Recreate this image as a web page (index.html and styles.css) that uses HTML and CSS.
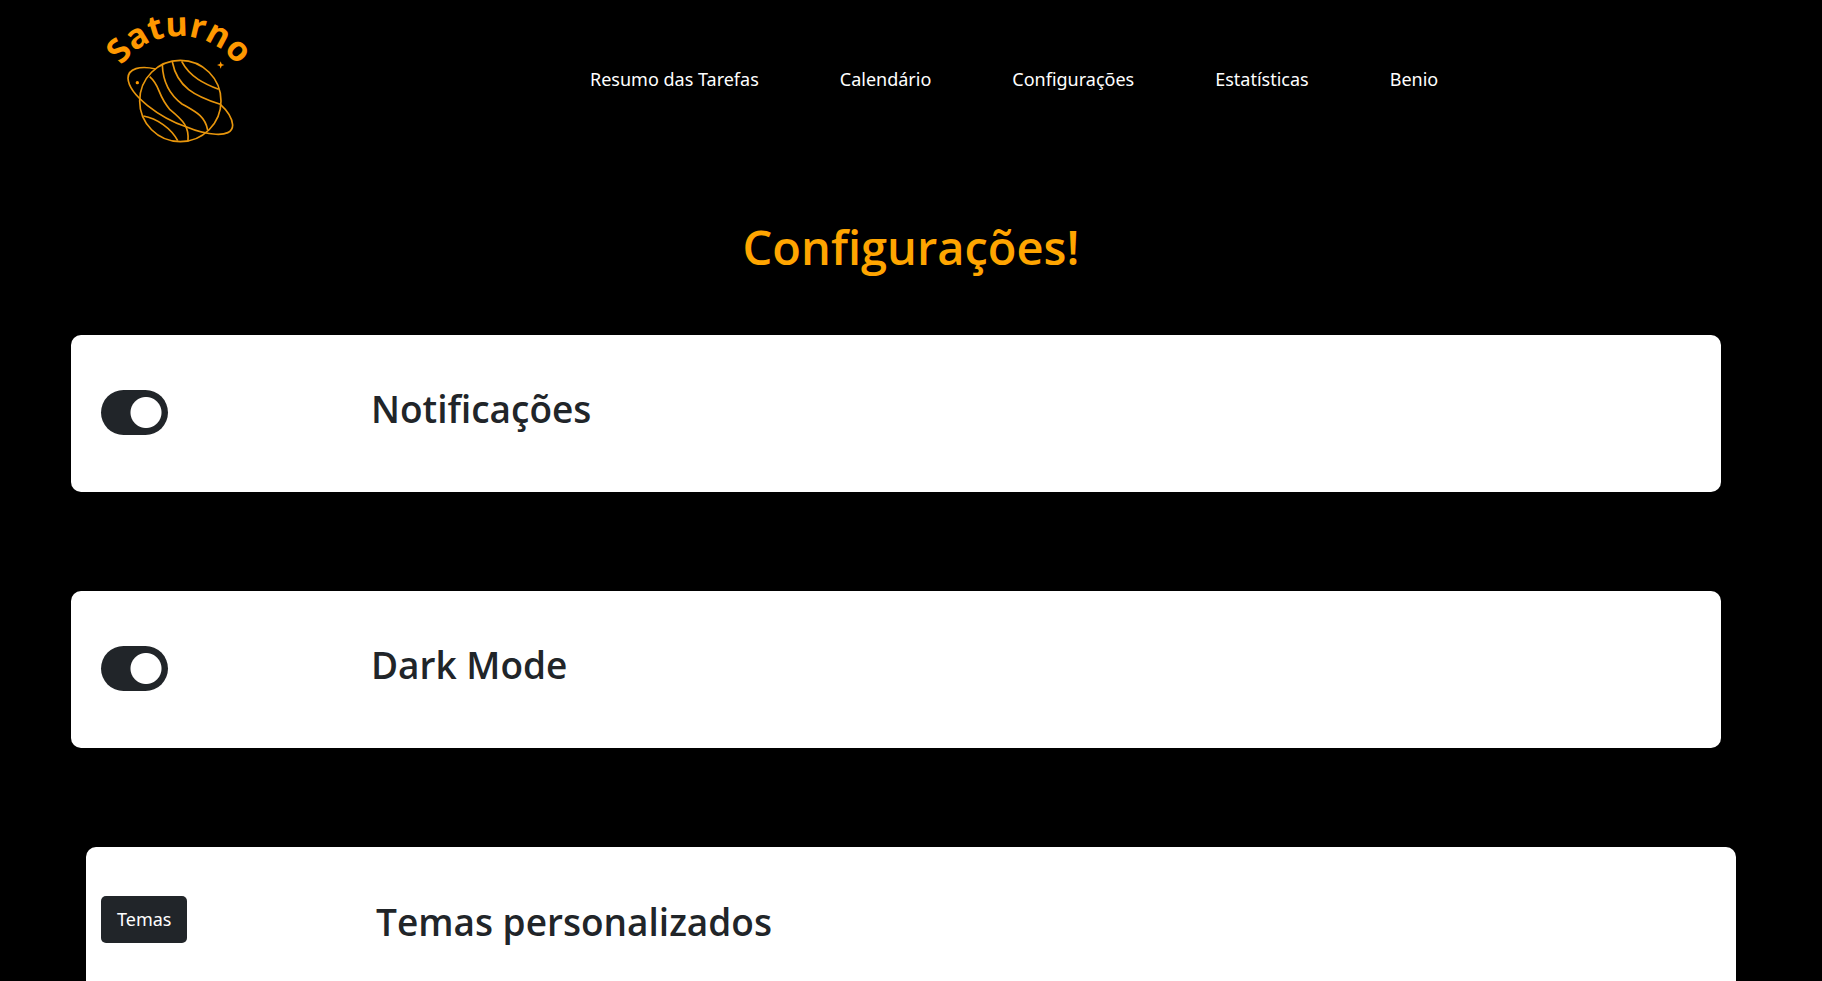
FILE: index.html
```
<!DOCTYPE html>
<html lang="pt-BR">
<head>
<meta charset="utf-8">
<meta name="viewport" content="width=device-width, initial-scale=1">
<title>Saturno - Configurações</title>
<link rel="stylesheet" href="styles.css">
</head>
<body>
<header class="header">
  <a class="logo" href="#" aria-label="Saturno">
    <svg class="logo-art" viewBox="0 0 540 480">
      <path id="arc" d="M54 322A214 214 0 0 1 482 322" fill="none"/>
      <text class="logo-text"><textPath href="#arc" startOffset="50%">Saturno</textPath></text>
      <g class="logo-lines">
        <circle cx="271" cy="303" r="122"/>
        <path d="M197 207C150 196 114 206 114 235C116 285 210 354 290 381C340 402 428 420 428 375C426 350 410 330 391 313"/>
        <path d="M275 184C300 232 345 252 386 268"/>
        <path d="M247 186C262 262 315 288 391 313"/>
        <path d="M217 195C219 250 240 285 276 312C318 336 345 348 353 390"/>
        <path d="M179 230C212 258 200 282 240 329C280 362 298 380 294 424"/>
        <path d="M160 348C200 355 244 385 263 422"/>
      </g>
      <path class="logo-star" d="M392 184L395 192L403 195L395 198L392 206L389 198L381 195L389 192Z"/>
      <circle class="logo-star" cx="142" cy="248" r="5"/>
    </svg>
  </a>
  <nav class="nav">
    <a href="#">Resumo das Tarefas</a>
    <a href="#">Calendário</a>
    <a href="#">Configurações</a>
    <a href="#">Estatísticas</a>
    <a href="#">Benio</a>
  </nav>
</header>
<main class="main">
  <h1 class="title">Configurações!</h1>
  <section class="card card-shifted">
    <div class="control"><input class="switch" type="checkbox" role="switch" id="notificacoes" checked></div>
    <h2 class="label"><label for="notificacoes">Notificações</label></h2>
  </section>
  <section class="card card-shifted">
    <div class="control"><input class="switch" type="checkbox" role="switch" id="dark-mode" checked></div>
    <h2 class="label"><label for="dark-mode">Dark Mode</label></h2>
  </section>
  <section class="card">
    <div class="control"><button class="button" type="button">Temas</button></div>
    <h2 class="label">Temas personalizados</h2>
  </section>
</main>
</body>
</html>
```
FILE: styles.css
```
* {
  box-sizing: border-box;
}

body {
  margin: 0;
  background: #000;
  color: #212529;
  font-family: "Noto Sans", "Open Sans", sans-serif;
  font-size: 18px;
  line-height: 31px;
}

.header {
  display: flex;
  align-items: center;
  padding-left: 90px;
}

.logo {
  width: 180px;
}

.logo-art {
  display: block;
  width: 100%;
  overflow: visible;
}

.logo-text {
  fill: #ff9800;
  font-family: "Open Sans", sans-serif;
  font-size: 102px;
  font-weight: 700;
  text-anchor: middle;
}

.logo-lines {
  fill: none;
  stroke: #e8960c;
  stroke-width: 5;
}

.logo-star {
  fill: #ff9800;
}

.nav {
  display: flex;
  gap: 81px;
  margin-left: 320px;
  padding-bottom: 2px;
}

.nav a {
  color: #fff;
  text-decoration: none;
}

.main {
  padding: 55px 86px 80px;
}

.title {
  margin: 0 0 56px;
  color: #ffa500;
  font-family: "Open Sans", sans-serif;
  font-size: 47px;
  font-weight: 600;
  line-height: 64px;
  text-align: center;
}

.card {
  display: grid;
  grid-template-columns: 1fr 5fr;
  column-gap: 6px;
  align-items: start;
  margin-bottom: 99px;
  padding: 49px 15px;
  min-height: 157px;
  background: #fff;
  border-radius: 10px;
}

.card-shifted {
  column-gap: 0;
  margin-right: 15px;
  margin-left: -15px;
  padding: 48px 0 48px 30px;
}

.control {
  display: flex;
}

.card-shifted .control {
  padding-top: 7px;
}

.switch {
  appearance: none;
  width: 67px;
  height: 45px;
  margin: 0;
  border-radius: 23px;
  background: radial-gradient(circle at 45px 50%, #fff 15px, #212529 16px);
}

.label {
  margin: 0;
  font-family: "Open Sans", sans-serif;
  font-size: 37px;
  font-weight: 600;
  line-height: 52px;
}

.button {
  padding: 8px 16px;
  border: 0;
  border-radius: 5px;
  background: #212529;
  color: #fff;
  font: inherit;
}
```
